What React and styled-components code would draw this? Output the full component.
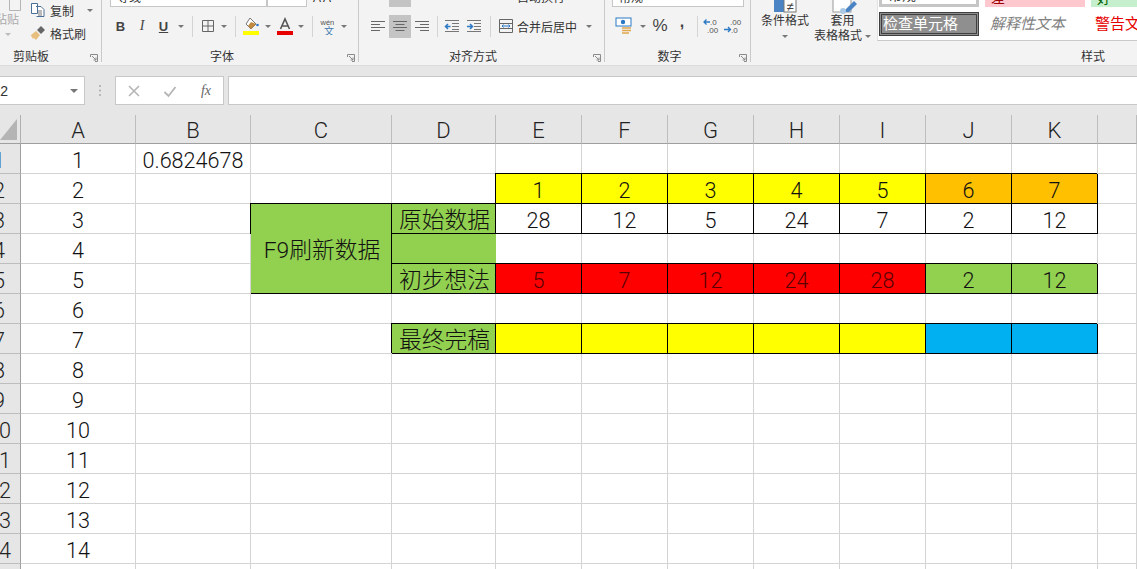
import React from "react";
import styled, { createGlobalStyle } from "styled-components";

const FONT = '"Liberation Sans", "Noto Sans CJK SC", sans-serif';
const SHEET_FONT = 'Roboto, "Noto Sans CJK SC", sans-serif';

const Global = createGlobalStyle`
  html, body { margin: 0; padding: 0; background: #fff; overflow: hidden; }
  body { font-family: ${FONT}; }
  * { box-sizing: border-box; }
`;

const Page = styled.div`
  width: 1137px;
  height: 569px;
  overflow: hidden;
  display: flex;
  flex-direction: column;
`;

/* ---------- ribbon ---------- */
const Ribbon = styled.div`
  height: 66px;
  flex: none;
  display: flex;
  background: #f3f3f3;
  border-bottom: 1px solid #dcdcdc;
`;
const Group = styled.section`
  width: ${(p) => p.$w}px;
  flex: ${(p) => (p.$grow ? 1 : "none")};
  height: 62px;
  display: flex;
  flex-direction: column;
  border-right: ${(p) => (p.$grow ? "none" : "1px solid #c9c9c9")};
  position: relative;
`;
const GroupBody = styled.div`
  height: 48px;
  overflow: hidden;
  flex: none;
  padding-left: ${(p) => p.$pad || 0}px;
`;
const GroupLabel = styled.div`
  height: 18px;
  font-size: 12px;
  line-height: 18px;
  color: #333;
  text-align: ${(p) => (p.$align ? "left" : "center")};
  padding-left: ${(p) => p.$left || 0}px;
  padding-right: ${(p) => p.$right || 0}px;
`;
const Launcher = styled.svg`
  position: absolute;
  right: 3px;
  bottom: 0;
  width: 8px;
  height: 8px;
`;
const Sliver = styled.div`
  height: 7px;
  display: flex;
  align-items: flex-end;
  overflow: hidden;
`;
const FieldStub = styled.div`
  height: 7px;
  width: ${(p) => p.$w}px;
  background: #fff;
  border: 1px solid #c6c6c6;
  border-top: none;
  margin-right: ${(p) => p.$after || 0}px;
  font-size: 12px;
  line-height: 1;
  color: #333;
  display: flex;
  align-items: flex-end;
  padding-left: 4px;
  overflow: hidden;
`;
const StubText = styled.span`
  font-size: 12px;
  line-height: 12px;
  margin-bottom: ${(p) => p.$up ?? 2}px;
  margin-left: ${(p) => p.$left || 0}px;
  color: #333;
  white-space: nowrap;
  flex: none;
`;
const StubHighlight = styled.div`
  width: 22px;
  height: 7px;
  background: #c4c4c4;
  margin-left: 22px;
`;
const ToolRow = styled.div`
  display: flex;
  align-items: center;
  height: 24px;
  margin-top: 7px;
`;
const Slot = styled.div`
  width: ${(p) => p.$w}px;
  height: 23px;
  flex: none;
  display: flex;
  align-items: center;
  justify-content: center;
  background: ${(p) => (p.$on ? "#c4c4c4" : "transparent")};
  color: #444;
  font-size: ${(p) => p.$size || 13}px;
  font-weight: ${(p) => (p.$bold ? 700 : 400)};
  font-style: ${(p) => (p.$italic ? "italic" : "normal")};
  text-decoration: ${(p) => (p.$under ? "underline" : "none")};
  font-family: ${(p) => (p.$serif ? '"Liberation Serif", serif' : FONT)};
  padding-bottom: ${(p) => p.$lift || 0}px;
`;
const Caret = styled.span`
  display: block;
  width: 0;
  height: 0;
  border-left: 3px solid transparent;
  border-right: 3px solid transparent;
  border-top: 3px solid #777;
`;
const Sep = styled.span`
  display: block;
  width: 1px;
  height: 21px;
  background: #d4d4d4;
`;
const ToolText = styled.span`
  font-size: 12px;
  color: #333;
  white-space: nowrap;
  flex: none;
  width: ${(p) => p.$w}px;
`;

/* clipboard */
const ClipLayout = styled.div`
  display: flex;
  height: 48px;
`;
const PasteCol = styled.div`
  width: 30px;
  flex: none;
  display: flex;
  flex-direction: column;
  align-items: flex-end;
  position: relative;
`;
const PasteTop = styled.svg`
  width: 14px;
  height: 11px;
  margin-right: 8px;
  flex: none;
`;
const PasteText = styled.span`
  font-size: 12px;
  line-height: 16px;
  color: #aaa;
  margin-top: 1px;
  margin-right: 11px;
  white-space: nowrap;
`;
const PasteCaret = styled(Caret)`
  margin: 5px 19px 0 0;
  border-top-color: #bbb;
`;
const ClipCol = styled.div`
  flex: 1;
  display: flex;
  flex-direction: column;
  gap: 5px;
`;
const ClipRow = styled.div`
  height: 18px;
  display: flex;
  align-items: center;
  gap: 4px;
  margin-top: ${(p) => p.$top || 0}px;
  font-size: 12px;
  color: #333;
`;
const ClipIconBox = styled.svg`
  width: 16px;
  height: 16px;
  flex: none;
`;
const ClipCaret = styled(Caret)`
  margin-left: 9px;
`;

/* styles */
const StyleLayout = styled.div`
  display: flex;
  height: 48px;
  padding-left: 5px;
`;
const BigButton = styled.div`
  width: ${(p) => p.$w}px;
  flex: none;
  height: 44px;
  overflow: hidden;
  display: flex;
  flex-direction: column;
  justify-content: flex-end;
  align-items: center;
  font-size: 12px;
  line-height: 15px;
  color: #333;
`;
const BigIcon = styled.svg`
  width: 28px;
  height: 24px;
  flex: none;
  margin-left: ${(p) => p.$left || 0}px;
`;
const BigLine = styled.div`
  height: 15px;
  display: flex;
  align-items: center;
  gap: 3px;
  white-space: nowrap;
  flex: none;
`;
const Gallery = styled.div`
  flex: 1;
  height: 41px;
  margin-left: 6px;
  background: #fff;
  border-bottom: 1px solid #c9c9c9;
  border-left: 1px solid #e2e2e2;
  padding-left: 1px;
  display: grid;
  grid-template-columns: 100px 100px 1fr;
  grid-template-rows: 7px 23px;
  column-gap: 6px;
  row-gap: 6px;
`;
const TopStyle = styled.div`
  background: ${(p) => p.$bg};
  color: ${(p) => p.$fg};
  border: ${(p) => (p.$frame ? "3px solid #c6c6c6" : "none")};
  border-top: none;
  font-size: 14px;
  line-height: 14px;
  height: 7px;
  overflow: hidden;
  display: flex;
  align-items: flex-end;
  padding-left: 6px;
  white-space: nowrap;
`;
const TopStyleText = styled.span`
  margin-bottom: 2px;
  flex: none;
`;
const CheckStyle = styled.div`
  background: #8f8f8f;
  color: #fff;
  border: 1px solid #3f3f3f;
  outline: 1px solid #3f3f3f;
  outline-offset: -3px;
  font-size: 15px;
  display: flex;
  align-items: center;
  padding: 0 0 3px 3px;
  margin-top: -1px;
  white-space: nowrap;
`;
const NoteStyle = styled.div`
  color: ${(p) => p.$fg};
  font-style: ${(p) => (p.$italic ? "italic" : "normal")};
  font-size: 15px;
  display: flex;
  align-items: center;
  padding: 0 0 4px ${(p) => p.$pad}px;
  white-space: nowrap;
  overflow: hidden;
`;

/* ---------- formula bar ---------- */
const FormulaBar = styled.div`
  height: 49px;
  flex: none;
  background: #e6e6e6;
  display: flex;
  align-items: flex-start;
  padding-top: 10px;
`;
const NameBox = styled.div`
  width: 85px;
  height: 29px;
  background: #fff;
  border: 1px solid #c8c8c8;
  border-left: none;
  display: flex;
  align-items: center;
  justify-content: space-between;
  padding-right: 6px;
  font-size: 14px;
  color: #333;
  overflow: hidden;
`;
const NameText = styled.span`
  margin-left: -9px;
`;
const NameCaret = styled.span`
  display: block;
  width: 0;
  height: 0;
  border-left: 4px solid transparent;
  border-right: 4px solid transparent;
  border-top: 4px solid #777;
`;
const Grip = styled.svg`
  width: 30px;
  height: 29px;
  flex: none;
`;
const FuncBox = styled.div`
  width: 109px;
  height: 29px;
  background: #fff;
  border: 1px solid #c8c8c8;
  display: flex;
  align-items: center;
`;
const FuncSlot = styled.div`
  width: 36px;
  flex: none;
  display: flex;
  justify-content: center;
  color: #666;
  font-family: "Liberation Serif", serif;
  font-style: italic;
  font-size: 14px;
`;
const FormulaInput = styled.div`
  flex: 1;
  height: 29px;
  margin-left: 4px;
  background: #fff;
  border: 1px solid #c8c8c8;
  border-right: none;
`;

/* ---------- sheet ---------- */
const Sheet = styled.div`
  flex: 1;
  min-height: 0;
  overflow: hidden;
  display: grid;
  grid-template-columns: 21px 115px 115px 141px 104px repeat(7, 86px) 1fr;
  grid-template-rows: 29px;
  grid-auto-rows: 30px;
  background: #fff;
  font-family: ${SHEET_FONT};
  font-weight: 300;
`;
const Corner = styled.div`
  background: #e6e6e6;
  border-right: 1px solid #b0b0b0;
  border-bottom: 1px solid #9f9f9f;
  display: flex;
  align-items: flex-start;
`;
const CornerMark = styled.svg`
  width: 17px;
  height: 21px;
  margin-top: 4px;
`;
const ColHead = styled.div`
  background: #e6e6e6;
  border-right: 1px solid #bdbdbd;
  border-bottom: 1px solid #9f9f9f;
  color: #222;
  font-size: 22px;
  text-align: center;
  line-height: 32px;
  overflow: hidden;
`;
const RowHead = styled.div`
  background: #e6e6e6;
  border-right: 1px solid #9f9f9f;
  border-bottom: 1px solid #bdbdbd;
  color: #222;
  font-size: 21.6px;
  display: flex;
  justify-content: center;
  align-items: center;
  padding-top: 4px;
  overflow: hidden;
  white-space: nowrap;
`;
const RowNum = styled.span`
  margin-left: -22px;
`;
const Cell = styled.div`
  background: ${(p) => p.$fill || "#fff"};
  border-right: 1px solid ${(p) => (p.$boxed ? "#000" : p.$fill || "#d4d4d4")};
  border-bottom: 1px solid ${(p) => (p.$boxed ? "#000" : "#d4d4d4")};
  box-shadow: ${(p) => (p.$boxed ? "-1px -1px 0 0 #000" : "none")};
  grid-row: ${(p) => (p.$span ? `span ${p.$span}` : "auto")};
  color: ${(p) => p.$ink || "#111"};
  font-size: ${(p) => (p.$cjk ? 22.8 : 21.6)}px;
  display: flex;
  align-items: center;
  justify-content: center;
  padding-top: ${(p) => (p.$cjk ? 0 : 4)}px;
  padding-left: ${(p) => (p.$cjk ? 2 : 0)}px;
  white-space: nowrap;
  overflow: visible;
`;

const GREEN = "#92d050";
const YELLOW = "#ffff00";
const ORANGE = "#ffc000";
const RED = "#ff0000";
const BLUE = "#00b0f0";

const COLS = ["A", "B", "C", "D", "E", "F", "G", "H", "I", "J", "K", ""];

const box = (fill, text, extra = {}) => ({ $fill: fill, $boxed: true, text, ...extra });

function sheetRow(n) {
  const blank = {};
  const cells = new Array(12).fill(blank);
  cells[0] = { text: String(n) };
  if (n === 1) cells[1] = { text: "0.6824678" };
  if (n === 2) {
    [1, 2, 3, 4, 5].forEach((v, i) => (cells[4 + i] = box(YELLOW, v)));
    cells[9] = box(ORANGE, 6);
    cells[10] = box(ORANGE, 7);
  }
  if (n === 3) {
    cells[2] = box(GREEN, "F9刷新数据", { $span: 3, $cjk: true });
    cells[3] = box(GREEN, "原始数据", { $cjk: true });
    [28, 12, 5, 24, 7, 2, 12].forEach((v, i) => (cells[4 + i] = box("#fff", v)));
  }
  if (n === 4) {
    cells[2] = null;
    cells[3] = { $fill: GREEN };
  }
  if (n === 5) {
    cells[2] = null;
    cells[3] = box(GREEN, "初步想法", { $cjk: true });
    [5, 7, 12, 24, 28].forEach((v, i) => (cells[4 + i] = box(RED, v, { $ink: "#5a0000" })));
    cells[9] = box(GREEN, 2);
    cells[10] = box(GREEN, 12);
  }
  if (n === 7) {
    cells[3] = box(GREEN, "最终完稿", { $cjk: true });
    [4, 5, 6, 7, 8].forEach((i) => (cells[i] = box(YELLOW)));
    cells[9] = box(BLUE);
    cells[10] = box(BLUE);
  }
  return cells;
}

const LauncherIcon = () => (
  <Launcher viewBox="0 0 8 8" fill="none" stroke="#8a8a8a" strokeWidth="1">
    <path d="M0.5 3V0.5H7.5V7.5H5" />
    <path d="M2 2L6 6M6 3.5V6H3.5" />
  </Launcher>
);

const Lines = ({ widths, color = "#666", offset }) => (
  <svg width="16" height="14" viewBox="0 0 16 14" fill="none" stroke={color} strokeWidth="1">
    {widths.map((w, i) => {
      const startX = offset === "center" ? (16 - w) / 2 : offset === "right" ? 15 - w : 1;
      return <path key={i} d={`M${startX} ${2.5 + i * 3}h${w}`} />;
    })}
  </svg>
);

const IndentIcon = ({ flip }) => (
  <svg width="16" height="14" viewBox="0 0 16 14" fill="none">
    <g stroke="#777">
      <path d="M1 1.5h14M8 4.5h7M8 7.5h7M8 10.5h7M1 12.5h14" />
    </g>
    <path d={flip ? "M1 7.5h5M4 5l2.5 2.5L4 10" : "M6.5 7.5h-5M4 5L1.5 7.5 4 10"} stroke="#2b78c4" strokeWidth="1.5" />
  </svg>
);

const DecimalIcon = ({ more }) => (
  <svg width="18" height="16" viewBox="0 0 18 16" fill="none">
    <text x={more ? 6 : 7} y="7" fontSize="8" fill="#555" fontFamily={FONT}>{more ? ".00" : ".0"}</text>
    <text x={more ? 7 : 4} y="15" fontSize="8" fill="#555" fontFamily={FONT}>{more ? ".0" : ".00"}</text>
    {more ? (
      <path d="M0 11.5h6M4 9l2.5 2.5L4 14" stroke="#2b78c4" strokeWidth="1.3" />
    ) : (
      <path d="M7 4h-6M3.5 1.5L1 4l2.5 2.5" stroke="#2b78c4" strokeWidth="1.3" />
    )}
  </svg>
);

export default function App() {
  const rows = Array.from({ length: 15 }, (_, i) => i + 1);
  return (
    <Page>
      <Global />
      <Ribbon>
        <Group $w={102}>
          <GroupBody>
            <ClipLayout>
              <PasteCol>
                <PasteTop viewBox="0 0 14 11" fill="none" stroke="#b5b5b5">
                  <path d="M1.5 0V10.5H12.5V0" />
                </PasteTop>
                <PasteText>粘贴</PasteText>
                <PasteCaret />
              </PasteCol>
              <ClipCol>
                <ClipRow $top={1}>
                  <ClipIconBox viewBox="0 0 16 16" fill="none" stroke="#4a6f96">
                    <path d="M1.5 1.5h6v10h-6zM6 4.5h5l3 3v7H6.5" fill="#fff" />
                    <path d="M8 9h4M8 11h4M8 13h4" stroke="#777" />
                  </ClipIconBox>
                  复制
                  <ClipCaret />
                </ClipRow>
                <ClipRow>
                  <ClipIconBox viewBox="0 0 16 16">
                    <path d="M1 10l5-4 4 4-4 5-2-2-1 1-1-2-1-1z" fill="#e8bf7c" />
                    <path d="M7 5l4-4 4 4-4 4z" fill="#666" />
                  </ClipIconBox>
                  格式刷
                </ClipRow>
              </ClipCol>
            </ClipLayout>
          </GroupBody>
          <GroupLabel $align $left={13}>剪贴板</GroupLabel>
          <LauncherIcon />
        </Group>

        <Group $w={257}>
          <GroupBody $pad={8}>
            <Sliver>
              <FieldStub $w={157}><StubText $left={2}>等线</StubText></FieldStub>
              <FieldStub $w={40} $after={6} />
              <StubText $up={3}>A A</StubText>
            </Sliver>
            <ToolRow>
              <Slot $w={21} $bold $size={13}>B</Slot>
              <Slot $w={22} $italic $serif $size={14}>I</Slot>
              <Slot $w={21} $bold $under $size={13}>U</Slot>
              <Slot $w={13}><Caret /></Slot>
              <Slot $w={10}><Sep /></Slot>
              <Slot $w={21}>
                <svg width="14" height="14" viewBox="0 0 14 14" fill="none" stroke="#666">
                  <path d="M1.5 1.5h11v11h-11zM7 1.5v11M1.5 7h11" />
                </svg>
              </Slot>
              <Slot $w={12}><Caret /></Slot>
              <Slot $w={10}><Sep /></Slot>
              <Slot $w={22}>
                <svg width="18" height="18" viewBox="0 0 18 18">
                  <path d="M8 1l6 6-5 5-5-5z" fill="#fff" stroke="#777" />
                  <path d="M9 5l5 2-5 5-3-3z" fill="#c28a3c" />
                  <circle cx="15.5" cy="8" r="1.3" fill="#2b78c4" />
                  <rect x="1" y="14" width="16" height="4" fill="#ffff00" />
                </svg>
              </Slot>
              <Slot $w={11}><Caret /></Slot>
              <Slot $w={23}>
                <svg width="16" height="18" viewBox="0 0 16 18">
                  <path d="M3.5 12L8 2l4.5 10M5 9h6" fill="none" stroke="#555" strokeWidth="1.6" />
                  <rect x="0" y="14" width="16" height="4" fill="#e60000" />
                </svg>
              </Slot>
              <Slot $w={10}><Caret /></Slot>
              <Slot $w={12}><Sep /></Slot>
              <Slot $w={22}>
                <svg width="18" height="17" viewBox="0 0 18 17">
                  <text x="0.5" y="6.5" fontSize="7.5" fill="#555" fontFamily={FONT}>wén</text>
                  <text x="4" y="16.5" fontSize="10" fill="#3c78b0" fontFamily={FONT}>文</text>
                </svg>
              </Slot>
              <Slot $w={8}><Caret /></Slot>
            </ToolRow>
          </GroupBody>
          <GroupLabel $right={16}>字体</GroupLabel>
          <LauncherIcon />
        </Group>

        <Group $w={246}>
          <GroupBody $pad={8}>
            <Sliver>
              <StubHighlight />
              <StubText $left={106} $up={3}>自动换行</StubText>
            </Sliver>
            <ToolRow>
              <Slot $w={22}><Lines widths={[14, 9, 14, 9]} /></Slot>
              <Slot $w={22} $on><Lines widths={[14, 9, 14, 9]} offset="center" /></Slot>
              <Slot $w={22}><Lines widths={[14, 9, 14, 9]} offset="right" /></Slot>
              <Slot $w={8}><Sep /></Slot>
              <Slot $w={22}><IndentIcon /></Slot>
              <Slot $w={22}><IndentIcon flip /></Slot>
              <Slot $w={10}><Sep /></Slot>
              <Slot $w={22}>
                <svg width="16" height="16" viewBox="0 0 16 16" fill="none" stroke="#666">
                  <path d="M1.5 1.5h13v13h-13zM1.5 5.5h13M1.5 10.5h13" />
                  <path d="M4 8h8M4 8l1.5-1.5M4 8l1.5 1.5M12 8l-1.5-1.5M12 8l-1.5 1.5" stroke="#2b78c4" />
                </svg>
              </Slot>
              <ToolText $w={69}>合并后居中</ToolText>
              <Caret />
            </ToolRow>
          </GroupBody>
          <GroupLabel $right={17}>对齐方式</GroupLabel>
          <LauncherIcon />
        </Group>

        <Group $w={146}>
          <GroupBody $pad={7}>
            <Sliver>
              <FieldStub $w={132}><StubText $left={2}>常规</StubText></FieldStub>
            </Sliver>
            <ToolRow>
              <Slot $w={24}>
                <svg width="18" height="18" viewBox="0 0 18 18">
                  <rect x="1" y="1" width="15" height="8" fill="#fff" stroke="#2b78c4" />
                  <circle cx="8" cy="5" r="2.2" fill="#2b78c4" />
                  <path d="M7 11h9M7 13.5h9M7 16h7" stroke="#e0a84e" strokeWidth="1.4" />
                </svg>
              </Slot>
              <Slot $w={13}><Caret /></Slot>
              <Slot $w={22} $size={17}>%</Slot>
              <Slot $w={22} $size={16} $bold $lift={8}>,</Slot>
              <Slot $w={8}><Sep /></Slot>
              <Slot $w={21}><DecimalIcon /></Slot>
              <Slot $w={22}><DecimalIcon more /></Slot>
            </ToolRow>
          </GroupBody>
          <GroupLabel $right={16}>数字</GroupLabel>
          <LauncherIcon />
        </Group>

        <Group $grow>
          <GroupBody>
            <StyleLayout>
              <BigButton $w={58}>
                <BigIcon viewBox="0 0 28 24" fill="none">
                  <rect x="3" y="2" width="12" height="20" fill="#4a84c4" />
                  <rect x="13" y="4" width="12" height="18" fill="#fff" stroke="#777" />
                  <text x="15.5" y="21" fontSize="13" fill="#444" fontFamily={FONT}>≠</text>
                </BigIcon>
                <BigLine>条件格式</BigLine>
                <BigLine><Caret /></BigLine>
              </BigButton>
              <BigButton $w={57}>
                <BigIcon viewBox="0 0 28 24" fill="none" $left={2}>
                  <rect x="3" y="4" width="18" height="18" fill="#fff" stroke="#999" />
                  <path d="M13 22L24 11l3 3-8 8z" fill="#4a84c4" />
                  <circle cx="13" cy="21" r="3" fill="#aac8e4" />
                </BigIcon>
                <BigLine>套用</BigLine>
                <BigLine>表格格式<Caret /></BigLine>
              </BigButton>
              <Gallery>
                <TopStyle $bg="#fff" $fg="#333" $frame><TopStyleText>常规</TopStyleText></TopStyle>
                <TopStyle $bg="#ffc7ce" $fg="#9c0006"><TopStyleText>差</TopStyleText></TopStyle>
                <TopStyle $bg="#c6efce" $fg="#006100"><TopStyleText>好</TopStyleText></TopStyle>
                <CheckStyle>检查单元格</CheckStyle>
                <NoteStyle $fg="#7f7f7f" $italic $pad={5}>解释性文本</NoteStyle>
                <NoteStyle $fg="#e60000" $pad={4}>警告文本</NoteStyle>
              </Gallery>
            </StyleLayout>
          </GroupBody>
          <GroupLabel $left={298}>样式</GroupLabel>
        </Group>
      </Ribbon>

      <FormulaBar>
        <NameBox>
          <NameText>K2</NameText>
          <NameCaret />
        </NameBox>
        <Grip viewBox="0 0 30 29" fill="#aaa">
          <circle cx="15" cy="10" r="1" />
          <circle cx="15" cy="14.5" r="1" />
          <circle cx="15" cy="19" r="1" />
        </Grip>
        <FuncBox>
          <FuncSlot>
            <svg width="14" height="14" viewBox="0 0 14 14" fill="none" stroke="#b5b5b5" strokeWidth="1.6">
              <path d="M2 2l10 10M12 2L2 12" />
            </svg>
          </FuncSlot>
          <FuncSlot>
            <svg width="14" height="14" viewBox="0 0 14 14" fill="none" stroke="#b5b5b5" strokeWidth="1.8">
              <path d="M1.5 8l4 4 7-9" />
            </svg>
          </FuncSlot>
          <FuncSlot>fx</FuncSlot>
        </FuncBox>
        <FormulaInput />
      </FormulaBar>

      <Sheet>
        <Corner>
          <CornerMark viewBox="0 0 17 21"><polygon points="17,0 17,21 0,21" fill="#b4b4b4" /></CornerMark>
        </Corner>
        {COLS.map((c, i) => <ColHead key={i}>{c}</ColHead>)}
        {rows.map((n) => (
          <React.Fragment key={n}>
            <RowHead><RowNum>{n}</RowNum></RowHead>
            {n < 15 && sheetRow(n).map((cell, i) => {
              if (cell === null) return null;
              const { text, ...style } = cell;
              return <Cell key={i} {...style}>{text}</Cell>;
            })}
            {n === 15 && COLS.map((_, i) => <Cell key={i} />)}
          </React.Fragment>
        ))}
      </Sheet>
    </Page>
  );
}
